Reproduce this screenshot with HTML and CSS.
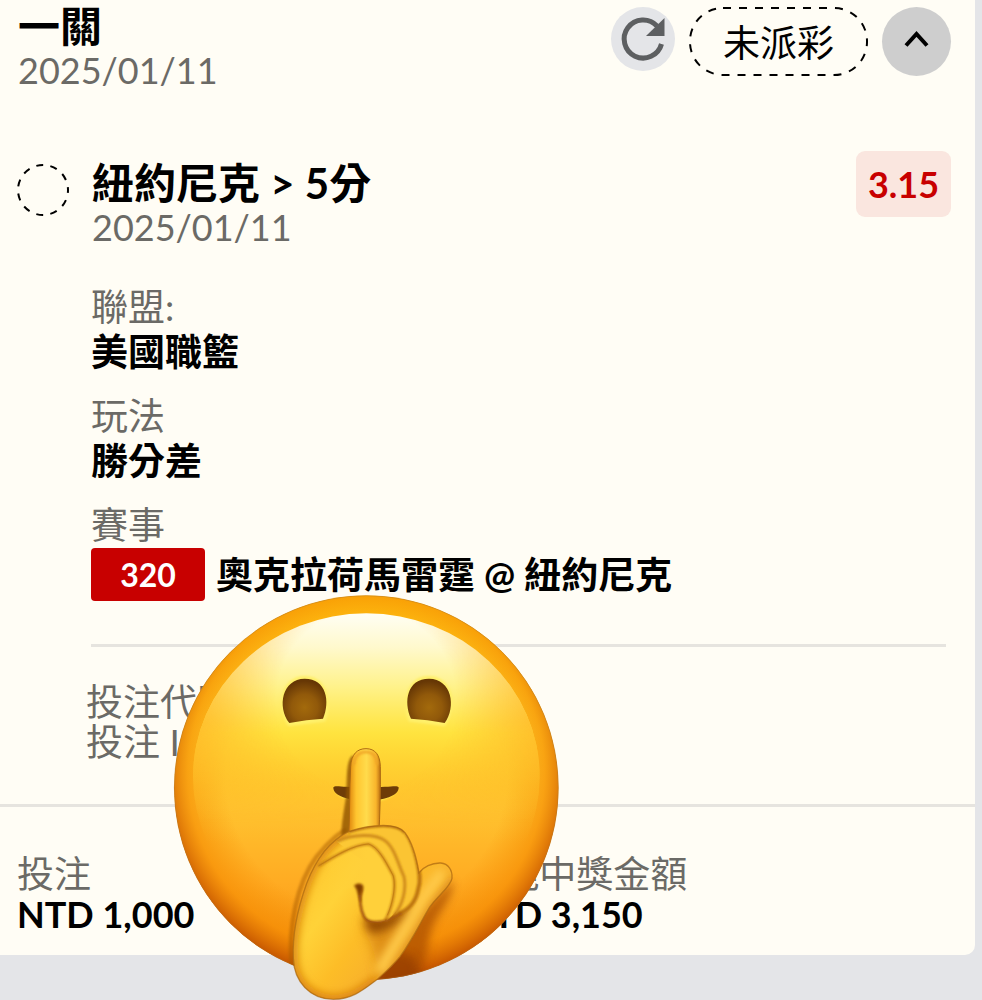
FILE: index.html
```html
<!DOCTYPE html>
<html lang="zh-Hant">
  <head>
    <meta charset="UTF-8" />
    <meta name="viewport" content="width=device-width, initial-scale=1.0" />
    <title>投注紀錄</title>
    <link rel="stylesheet" href="styles.css">
  </head>
  <body>
    <main class="ticket">
      <header class="ticket-head">
        <div class="ticket-info">
          <h1 class="ticket-title">一關</h1>
          <div class="date">2025/01/11</div>
        </div>
        <div class="actions">
          <button class="refresh" type="button" aria-label="重新整理">
            <svg viewBox="0 0 64 64" fill="none">
              <path d="M50.500 37A19 19 0 1 1 46 19" stroke="#5d5f61" stroke-width="5" />
              <path d="M53.500 11V29H35Z" fill="#5d5f61" />
            </svg>
          </button>
          <div class="status">
            <svg class="status-line" aria-hidden="true">
              <rect class="status-rect" x="1" y="1" rx="33" />
            </svg>
            未派彩
          </div>
          <button class="toggle" type="button" aria-label="收合">
            <svg viewBox="0 0 69 69" fill="none">
              <path d="M24 38.500L34.500 27L45 38.500" stroke="#000" stroke-width="4" />
            </svg>
          </button>
        </div>
      </header>

      <section class="pick">
        <svg class="pick-mark" viewBox="0 0 54 54" fill="none">
          <circle cx="27" cy="27" r="25" stroke="#000" stroke-width="2" stroke-dasharray="7 7.280" stroke-dashoffset="4" />
        </svg>
        <div class="pick-info">
          <h2 class="pick-name">紐約尼克 &gt; 5分</h2>
          <div class="date">2025/01/11</div>
        </div>
        <div class="odds">3.15</div>
      </section>

      <section class="details">
        <dl class="detail-list">
          <div class="detail">
            <dt>聯盟:</dt>
            <dd>美國職籃</dd>
          </div>
          <div class="detail">
            <dt>玩法</dt>
            <dd>勝分差</dd>
          </div>
          <div class="detail">
            <dt>賽事</dt>
            <dd class="match"><span class="match-no">320</span>奧克拉荷馬雷霆 @ 紐約尼克</dd>
          </div>
        </dl>
      </section>

      <section class="codes">
        <div>投注代號</div>
        <div>投注 ID</div>
      </section>

      <footer class="totals">
        <div class="total">
          <div class="total-label">投注</div>
          <div class="total-value">NTD 1,000</div>
        </div>
        <div class="total">
          <div class="total-label">可能中獎金額</div>
          <div class="total-value">NTD 3,150</div>
        </div>
      </footer>

      <svg class="sticker" viewBox="0 0 1230 1230" fill="none" aria-hidden="true">
        <defs>
          <linearGradient id="face" x1="0" y1="18" x2="0" y2="1170" gradientUnits="userSpaceOnUse">
            <stop offset="0" stop-color="#ffc20f" />
            <stop offset="0.35" stop-color="#ffcf2c" />
            <stop offset="0.55" stop-color="#ffc22f" />
            <stop offset="0.75" stop-color="#ffab22" />
            <stop offset="1" stop-color="#ef8709" />
          </linearGradient>
          <radialGradient id="rim" cx="619" cy="550" r="622" gradientUnits="userSpaceOnUse">
            <stop offset="0.68" stop-color="#f78b00" stop-opacity="0" />
            <stop offset="0.86" stop-color="#f58a00" stop-opacity="0.6" />
            <stop offset="1" stop-color="#c05000" />
          </radialGradient>
          <linearGradient id="shine" x1="0" y1="70" x2="0" y2="760" gradientUnits="userSpaceOnUse">
            <stop offset="0" stop-color="#fffef4" />
            <stop offset="0.15" stop-color="#fff9cc" />
            <stop offset="0.32" stop-color="#fff28a" />
            <stop offset="0.52" stop-color="#ffe641" stop-opacity="0.9" />
            <stop offset="0.75" stop-color="#ffd02f" stop-opacity="0.3" />
            <stop offset="1" stop-color="#ffc02f" stop-opacity="0" />
          </linearGradient>
          <radialGradient id="shade" cx="619" cy="330" r="600" gradientUnits="userSpaceOnUse">
            <stop offset="0.45" stop-color="#ffb324" stop-opacity="0" />
            <stop offset="0.9" stop-color="#ffb324" stop-opacity="0.85" />
          </radialGradient>
          <linearGradient id="fade" x1="0" y1="400" x2="0" y2="700" gradientUnits="userSpaceOnUse">
            <stop offset="0" stop-color="#fff" />
            <stop offset="1" stop-color="#000" />
          </linearGradient>
          <mask id="upper"><path d="M0 0H1230V1230H0Z" fill="url(#fade)" /></mask>
          <radialGradient id="eye" cx="0.5" cy="0.65" r="0.6">
            <stop offset="0" stop-color="#a36a0c" />
            <stop offset="0.5" stop-color="#91590a" />
            <stop offset="1" stop-color="#663705" />
          </radialGradient>
          <linearGradient id="finger" x1="238" y1="0" x2="332" y2="0" gradientUnits="userSpaceOnUse">
            <stop offset="0" stop-color="#e0890f" />
            <stop offset="0.22" stop-color="#ffc52f" />
            <stop offset="0.55" stop-color="#ffdb4c" />
            <stop offset="0.85" stop-color="#f9b52b" />
            <stop offset="1" stop-color="#b96c10" />
          </linearGradient>
          <linearGradient id="hand" x1="70" y1="400" x2="400" y2="640" gradientUnits="userSpaceOnUse">
            <stop offset="0" stop-color="#ffc62c" />
            <stop offset="0.4" stop-color="#ffd238" />
            <stop offset="0.7" stop-color="#fdbd27" />
            <stop offset="1" stop-color="#f7b02c" />
          </linearGradient>
          <linearGradient id="fist" x1="170" y1="0" x2="290" y2="0" gradientUnits="userSpaceOnUse">
            <stop offset="0" stop-color="#ffd03a" stop-opacity="0" />
            <stop offset="1" stop-color="#ffd03a" />
          </linearGradient>
          <filter id="soft3" x="-30%" y="-30%" width="160%" height="160%"><feGaussianBlur stdDeviation="3" /></filter>
          <filter id="soft12" x="-30%" y="-30%" width="160%" height="160%"><feGaussianBlur stdDeviation="12" /></filter>
          <filter id="soft18" x="-50%" y="-50%" width="200%" height="200%"><feGaussianBlur stdDeviation="18" /></filter>
          <clipPath id="face-clip"><circle cx="619" cy="593" r="577" /></clipPath>
          <clipPath id="hand-clip"><path d="M235 305C265 295 305 286 340 286C375 286 393 292 405 308C425 335 440 385 447 428C460 412 485 398 512 399C535 401 548 420 546 445C542 470 505 495 480 530C455 570 430 625 390 680C365 710 340 732 322 748C285 775 250 808 190 808C120 808 72 755 70 685C66 610 85 530 110 460C135 395 175 335 235 305Z" /></clipPath>
        </defs>

        <!-- face -->
        <g clip-path="url(#face-clip)">
          <circle cx="619" cy="593" r="577" fill="url(#face)" />
          <circle cx="619" cy="593" r="577" fill="url(#rim)" />
          <ellipse cx="619" cy="560" rx="520" ry="490" fill="url(#shine)" />
          <ellipse cx="619" cy="560" rx="520" ry="490" fill="url(#shade)" mask="url(#upper)" />
          <path d="M640 1180L700 1060L790 960L880 870C880 930 830 970 815 1020C800 1060 810 1100 770 1180Z" fill="#a54a06" opacity="0.7" filter="url(#soft12)" />
          <path d="M620 1190L700 1080L760 1100L790 1190Z" fill="#8f3a05" opacity="0.6" filter="url(#soft12)" />
          <path d="M395 1130C385 1010 410 880 470 800C510 750 550 720 560 720" stroke="#a75b05" stroke-width="14" opacity="0.5" filter="url(#soft3)" />
        </g>
        <circle cx="619" cy="593" r="576" stroke="#a97636" stroke-width="3" opacity="0.4" />

        <!-- eyes -->
        <path d="M388 403C352 350 365 263 434 263C502 263 512 345 492 390Z" fill="#fff36b" stroke="#fff06a" stroke-width="10" filter="url(#soft3)" />
        <path d="M852 403C890 350 876 263 807 263C739 263 731 345 750 390Z" fill="#fff36b" stroke="#fff06a" stroke-width="10" filter="url(#soft3)" />
        <path d="M388 399C350 350 367 266 434 266C500 266 511 335 489 386Q440 388 388 399Z" fill="url(#eye)" />
        <path d="M854 399C890 350 875 266 807 266C741 266 730 335 753 386Q802 388 854 399Z" fill="url(#eye)" />

        <!-- mouth -->
        <path d="M522 594C535 650 700 650 714 594Z" fill="#fff04f" filter="url(#soft3)" />
        <path d="M520 592C524 584 545 592 618 592C690 592 712 584 716 592C720 645 516 645 520 592Z" fill="#6e3c07" />

        <!-- finger and hand -->
        <g transform="translate(330 420)">
          <path d="M250 75C222 90 235 170 225 220C220 250 214 290 214 318H250Z" fill="#8f5305" opacity="0.8" filter="url(#soft3)" />
          <path d="M236 325C240 250 238 180 242 110C244 72 262 56 288 56C316 56 330 75 331 110C332 180 330 250 326 325Z" fill="url(#finger)" stroke="#ad6a12" stroke-width="3" />
          <path d="M252 105C254 76 268 66 288 66C308 66 320 80 321 105" stroke="#f0a628" stroke-width="8" filter="url(#soft3)" />
          <g clip-path="url(#hand-clip)">
            <path d="M50 270H570V820H50Z" fill="url(#hand)" />
            <path d="M322 748C285 775 250 808 190 808C120 808 72 755 70 685C66 610 85 530 110 460C135 395 175 335 235 305" stroke="#d98010" stroke-width="26" filter="url(#soft12)" />
            <path d="M325 750C385 690 430 625 480 530C505 495 542 470 546 445" stroke="#d98612" stroke-width="20" filter="url(#soft12)" />
            <path d="M280 560C280 630 325 650 320 730C380 660 410 600 440 510L350 580Z" fill="#d07c0c" opacity="0.65" filter="url(#soft18)" />
            <path d="M285 560C285 600 300 612 325 608C360 600 400 570 430 535L350 560Z" fill="#8d4404" opacity="0.9" filter="url(#soft12)" />
            <path d="M335 715C365 655 405 605 455 510L510 435" stroke="#ffca4a" stroke-width="34" stroke-linecap="round" filter="url(#soft12)" />
            <!-- curled fingers -->
            <path d="M235 305C330 275 390 280 408 308C435 345 458 440 445 475C438 520 410 545 380 552L300 360Z" fill="#fbc433" />
            <path d="M408 308C435 345 458 440 445 475C438 520 410 545 380 552" stroke="#bd7410" stroke-width="12" filter="url(#soft3)" />
            <path d="M200 335C250 310 318 312 345 332C375 355 385 405 402 440C412 480 395 540 350 572L290 400Z" fill="#fcc835" />
            <path d="M200 335C250 310 318 312 345 332C375 355 385 405 402 440C410 478 398 525 372 556" stroke="#cf8b1a" stroke-width="9" filter="url(#soft3)" />
            <path d="M145 408C200 375 250 345 295 342C325 350 350 400 370 438C380 475 366 535 345 572C320 580 295 575 285 562C270 535 270 505 274 480C260 468 240 470 170 500Z" fill="url(#fist)" />
            <path d="M145 408C200 375 250 345 295 342C325 350 350 400 370 438C380 475 366 535 345 572" stroke="#cb8516" stroke-width="8" filter="url(#soft3)" />
            <path d="M145 408C200 375 250 345 295 342C325 350 350 400 370 438C378 470 368 520 352 556" stroke="#b87413" stroke-width="2" />
            <path d="M275 478C268 505 270 535 282 560C290 576 315 580 345 573C365 570 380 555 395 550" stroke="#a5570a" stroke-width="8" filter="url(#soft3)" />
            <path d="M254 467C266 458 282 462 278 478C272 486 270 500 271 515C264 500 266 480 254 467Z" fill="#7e3c05" stroke="#9b540b" stroke-width="4" filter="url(#soft3)" />
            <path d="M235 305C265 295 305 286 340 286C375 286 393 292 405 308" stroke="#b26c10" stroke-width="10" filter="url(#soft3)" />
          </g>
          <path d="M235 305C265 295 305 286 340 286C375 286 393 292 405 308C425 335 440 385 447 428C460 412 485 398 512 399C535 401 548 420 546 445C542 470 505 495 480 530C455 570 430 625 390 680C365 710 340 732 322 748C285 775 250 808 190 808C120 808 72 755 70 685C66 610 85 530 110 460C135 395 175 335 235 305Z" stroke="#a8650f" stroke-width="4" opacity="0.7" />
        </g>
      </svg>
    </main>
  </body>
</html>
```

FILE: styles.css
```css
* {
  box-sizing: border-box;
}

body {
  margin: 0;
  min-height: 100vh;
  background: #e4e5e8;
  color: #000;
  font-family: Lato, "Noto Sans CJK TC", sans-serif;
  font-size: 37px;
}

h1,
h2,
dl,
dd {
  margin: 0;
}

button {
  padding: 0;
  border: 0;
  border-radius: 50%;
  cursor: pointer;
}

button svg {
  display: block;
  width: 100%;
}

.ticket {
  position: relative;
  margin-right: 7px;
  padding-top: 4px;
  background: #fffdf5;
  border-radius: 0 0 10px 0;
}

.ticket-head {
  display: flex;
  align-items: flex-start;
  padding: 0 24px 0 18px;
}

.actions {
  display: flex;
  align-items: flex-start;
  gap: 14px;
  padding-top: 3px;
}

.ticket-info,
.pick-info {
  flex: 1;
}

.ticket-title,
.pick-name {
  font-size: 42px;
  line-height: 44px;
  font-weight: bold;
}

.date {
  color: #6b6a66;
  font-size: 36px;
  line-height: 44px;
}

.refresh {
  width: 64px;
  background: #e4e5e8;
}

.status {
  position: relative;
  width: 179px;
  height: 69px;
  line-height: 72px;
  text-align: center;
}

.status-line {
  position: absolute;
  inset: 0;
  width: 100%;
  height: 100%;
}

.status-rect {
  width: calc(100% - 2px);
  height: calc(100% - 2px);
  fill: none;
  stroke: #000;
  stroke-width: 2px;
  stroke-dasharray: 8 8;
}

.toggle {
  width: 69px;
  background: #cecece;
}

.pick {
  display: flex;
  align-items: flex-start;
  padding: 59px 24px 0 16px;
}

.pick-mark {
  width: 54px;
  margin: 12px 22px 0 0;
}

.pick-info {
  padding-top: 10px;
}

.odds {
  width: 95px;
  border-radius: 9px;
  background: #fae6df;
  color: #c80000;
  font-size: 36px;
  font-weight: bold;
  line-height: 66px;
  text-align: center;
}

.details {
  margin: 0 29px 0 91px;
  padding: 36px 0 43px;
  border-bottom: 3px solid #e6e4df;
}

.detail-list {
  display: grid;
  gap: 20px;
}

.detail dt {
  color: #6b6a66;
  line-height: 44px;
}

.detail dd {
  font-weight: bold;
  line-height: 45px;
}

.detail .match {
  display: flex;
  align-items: center;
  gap: 11px;
  padding-top: 1px;
  line-height: 53px;
}

.match-no {
  width: 114px;
  border-radius: 4px;
  background: #c80000;
  color: #fff;
  font-size: 32px;
  text-align: center;
}

.codes {
  padding: 35px 24px 42px 86px;
  border-bottom: 3px solid #e6e4df;
  color: #6b6a66;
  line-height: 40px;
}

.totals {
  display: flex;
  padding: 47px 24px 21px 17px;
  line-height: 40px;
}

.total {
  flex: 0 0 48%;
}

.total-label {
  color: #6b6a66;
}

.total-value {
  font-size: 36px;
  font-weight: bold;
}

/* sits over the bet code and the amounts */
.sticker {
  position: absolute;
  left: 160px;
  top: 590px;
  width: 410px;
}
```
